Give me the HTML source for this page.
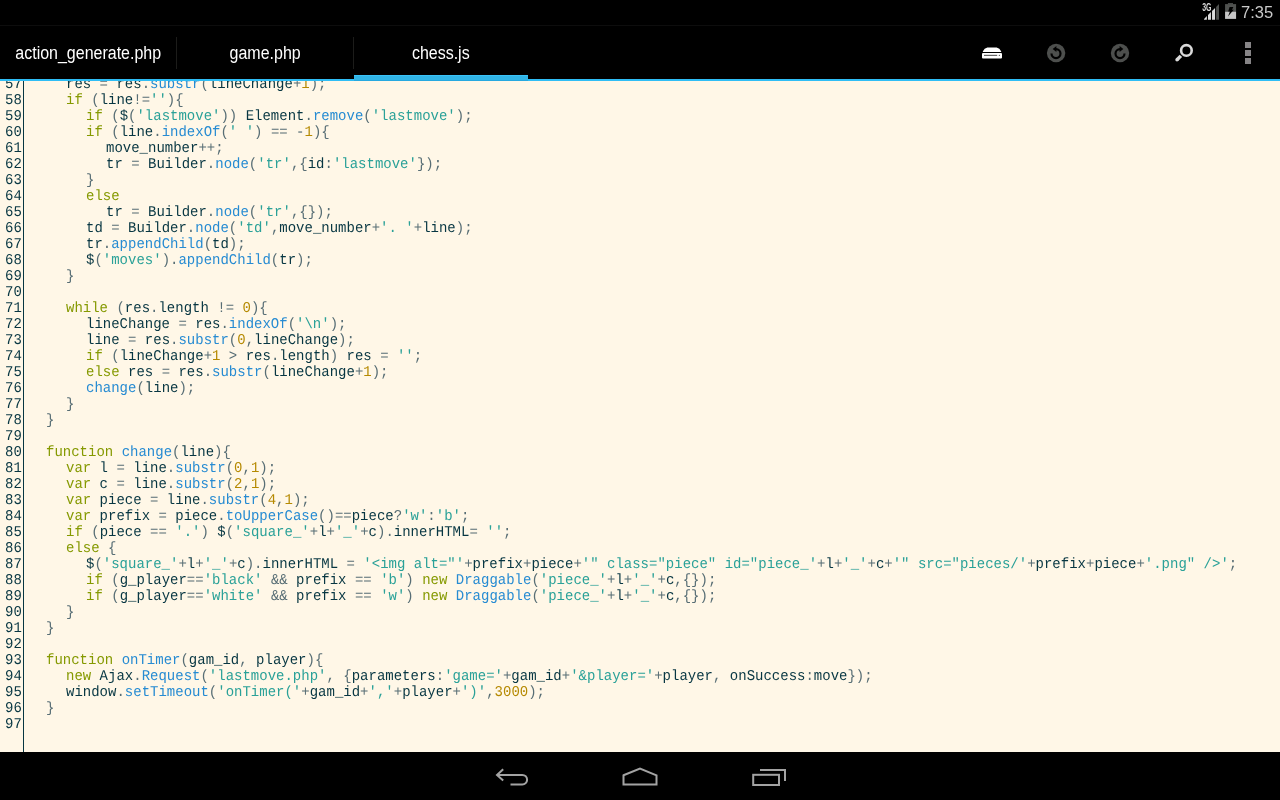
<!DOCTYPE html>
<html lang="en">
<head>
<meta charset="utf-8">
<title>chess.js</title>
<style>
html,body{margin:0;padding:0;}
body{width:1280px;height:800px;overflow:hidden;background:#000;position:relative;font-family:"Liberation Sans",sans-serif;}
#status{position:absolute;left:0;top:0;width:1280px;height:25px;background:#000;}
#status .sep{position:absolute;left:0;top:25px;width:1280px;height:1px;background:#0d0d0d;}
#clock{position:absolute;left:1241px;top:3px;font-size:16.5px;line-height:18px;color:#c9c9c9;will-change:transform;}
#bar{position:absolute;left:0;top:26px;width:1280px;height:53px;background:#000;}
.tab{position:absolute;top:0;height:53px;color:#fff;font-size:17.6px;line-height:54px;text-align:center;white-space:nowrap;will-change:transform;}
.tab span{display:inline-block;transform:scaleX(0.909);}
.tsep{position:absolute;top:11px;width:1px;height:32px;background:#1c1c1a;}
#sel{position:absolute;left:354px;top:75px;width:174px;height:6px;background:#31b4e6;box-sizing:border-box;border-top:1px solid #3ac2f8;border-bottom:1px solid #27a9e0;z-index:2;}
#blue{position:absolute;left:0;top:79px;width:1280px;height:2px;background:#2fbdf5;}
#ed{position:absolute;left:0;top:81px;width:1280px;height:671px;background:#fff7e7;overflow:hidden;}
#gut{position:absolute;left:23px;top:0;width:1px;height:671px;background:#073642;}
#code{text-rendering:geometricPrecision;will-change:transform;transform:scaleY(1.066667);transform-origin:0 0;position:absolute;left:0;top:-4px;width:1280px;font-family:"Liberation Mono",monospace;font-size:14px;line-height:15px;color:#073642;}
.ln{height:15px;position:relative;}
.no{position:absolute;left:5px;top:0;}
.cd{position:absolute;top:0;white-space:pre;}
.l0{left:26px}.l1{left:46px}.l2{left:66px}.l3{left:86px}.l4{left:106px}
.k{color:#859900}.f{color:#268bd2}.s{color:#2aa198}.n{color:#b58900}.p{color:#586e75}
#nav{position:absolute;left:0;top:752px;width:1280px;height:48px;background:#000;}
svg{position:absolute;overflow:visible;}
</style>
</head>
<body>
<div id="status">
  <div id="clock">7:35</div>
  <div class="sep"></div>
</div>
<div id="bar">
  <div class="tab" style="left:0;width:176px;"><span>action_generate.php</span></div>
  <div class="tsep" style="left:176px"></div>
  <div class="tab" style="left:177px;width:176px;"><span>game.php</span></div>
  <div class="tsep" style="left:353px"></div>
  <div class="tab" style="left:354px;width:174px;"><span>chess.js</span></div>
</div>
<div id="sel"></div>
<div id="blue"></div>
<div id="ed">
<div id="gut"></div>
<div id="code">
<div class="ln"><span class="no">57</span><span class="cd l2">res <span class="p">=</span> res<span class="p">.</span><span class="f">substr</span><span class="p">(</span>lineChange<span class="p">+</span><span class="n">1</span><span class="p">);</span></span></div>
<div class="ln"><span class="no">58</span><span class="cd l2"><span class="k">if</span> <span class="p">(</span>line<span class="p">!=</span><span class="s">''</span><span class="p">){</span></span></div>
<div class="ln"><span class="no">59</span><span class="cd l3"><span class="k">if</span> <span class="p">(</span>$<span class="p">(</span><span class="s">'lastmove'</span><span class="p">))</span> Element<span class="p">.</span><span class="f">remove</span><span class="p">(</span><span class="s">'lastmove'</span><span class="p">);</span></span></div>
<div class="ln"><span class="no">60</span><span class="cd l3"><span class="k">if</span> <span class="p">(</span>line<span class="p">.</span><span class="f">indexOf</span><span class="p">(</span><span class="s">' '</span><span class="p">)</span> <span class="p">==</span> <span class="p">-</span><span class="n">1</span><span class="p">){</span></span></div>
<div class="ln"><span class="no">61</span><span class="cd l4">move_number<span class="p">++;</span></span></div>
<div class="ln"><span class="no">62</span><span class="cd l4">tr <span class="p">=</span> Builder<span class="p">.</span><span class="f">node</span><span class="p">(</span><span class="s">'tr'</span><span class="p">,{</span>id<span class="p">:</span><span class="s">'lastmove'</span><span class="p">});</span></span></div>
<div class="ln"><span class="no">63</span><span class="cd l3"><span class="p">}</span></span></div>
<div class="ln"><span class="no">64</span><span class="cd l3"><span class="k">else</span></span></div>
<div class="ln"><span class="no">65</span><span class="cd l4">tr <span class="p">=</span> Builder<span class="p">.</span><span class="f">node</span><span class="p">(</span><span class="s">'tr'</span><span class="p">,{});</span></span></div>
<div class="ln"><span class="no">66</span><span class="cd l3">td <span class="p">=</span> Builder<span class="p">.</span><span class="f">node</span><span class="p">(</span><span class="s">'td'</span><span class="p">,</span>move_number<span class="p">+</span><span class="s">'. '</span><span class="p">+</span>line<span class="p">);</span></span></div>
<div class="ln"><span class="no">67</span><span class="cd l3">tr<span class="p">.</span><span class="f">appendChild</span><span class="p">(</span>td<span class="p">);</span></span></div>
<div class="ln"><span class="no">68</span><span class="cd l3">$<span class="p">(</span><span class="s">'moves'</span><span class="p">).</span><span class="f">appendChild</span><span class="p">(</span>tr<span class="p">);</span></span></div>
<div class="ln"><span class="no">69</span><span class="cd l2"><span class="p">}</span></span></div>
<div class="ln"><span class="no">70</span><span class="cd l0"></span></div>
<div class="ln"><span class="no">71</span><span class="cd l2"><span class="k">while</span> <span class="p">(</span>res<span class="p">.</span>length <span class="p">!=</span> <span class="n">0</span><span class="p">){</span></span></div>
<div class="ln"><span class="no">72</span><span class="cd l3">lineChange <span class="p">=</span> res<span class="p">.</span><span class="f">indexOf</span><span class="p">(</span><span class="s">'\n'</span><span class="p">);</span></span></div>
<div class="ln"><span class="no">73</span><span class="cd l3">line <span class="p">=</span> res<span class="p">.</span><span class="f">substr</span><span class="p">(</span><span class="n">0</span><span class="p">,</span>lineChange<span class="p">);</span></span></div>
<div class="ln"><span class="no">74</span><span class="cd l3"><span class="k">if</span> <span class="p">(</span>lineChange<span class="p">+</span><span class="n">1</span> <span class="p">&gt;</span> res<span class="p">.</span>length<span class="p">)</span> res <span class="p">=</span> <span class="s">''</span><span class="p">;</span></span></div>
<div class="ln"><span class="no">75</span><span class="cd l3"><span class="k">else</span> res <span class="p">=</span> res<span class="p">.</span><span class="f">substr</span><span class="p">(</span>lineChange<span class="p">+</span><span class="n">1</span><span class="p">);</span></span></div>
<div class="ln"><span class="no">76</span><span class="cd l3"><span class="f">change</span><span class="p">(</span>line<span class="p">);</span></span></div>
<div class="ln"><span class="no">77</span><span class="cd l2"><span class="p">}</span></span></div>
<div class="ln"><span class="no">78</span><span class="cd l1"><span class="p">}</span></span></div>
<div class="ln"><span class="no">79</span><span class="cd l0"></span></div>
<div class="ln"><span class="no">80</span><span class="cd l1"><span class="k">function</span> <span class="f">change</span><span class="p">(</span>line<span class="p">){</span></span></div>
<div class="ln"><span class="no">81</span><span class="cd l2"><span class="k">var</span> l <span class="p">=</span> line<span class="p">.</span><span class="f">substr</span><span class="p">(</span><span class="n">0</span><span class="p">,</span><span class="n">1</span><span class="p">);</span></span></div>
<div class="ln"><span class="no">82</span><span class="cd l2"><span class="k">var</span> c <span class="p">=</span> line<span class="p">.</span><span class="f">substr</span><span class="p">(</span><span class="n">2</span><span class="p">,</span><span class="n">1</span><span class="p">);</span></span></div>
<div class="ln"><span class="no">83</span><span class="cd l2"><span class="k">var</span> piece <span class="p">=</span> line<span class="p">.</span><span class="f">substr</span><span class="p">(</span><span class="n">4</span><span class="p">,</span><span class="n">1</span><span class="p">);</span></span></div>
<div class="ln"><span class="no">84</span><span class="cd l2"><span class="k">var</span> prefix <span class="p">=</span> piece<span class="p">.</span><span class="f">toUpperCase</span><span class="p">()==</span>piece<span class="p">?</span><span class="s">'w'</span><span class="p">:</span><span class="s">'b'</span><span class="p">;</span></span></div>
<div class="ln"><span class="no">85</span><span class="cd l2"><span class="k">if</span> <span class="p">(</span>piece <span class="p">==</span> <span class="s">'.'</span><span class="p">)</span> $<span class="p">(</span><span class="s">'square_'</span><span class="p">+</span>l<span class="p">+</span><span class="s">'_'</span><span class="p">+</span>c<span class="p">).</span>innerHTML<span class="p">=</span> <span class="s">''</span><span class="p">;</span></span></div>
<div class="ln"><span class="no">86</span><span class="cd l2"><span class="k">else</span> <span class="p">{</span></span></div>
<div class="ln"><span class="no">87</span><span class="cd l3">$<span class="p">(</span><span class="s">'square_'</span><span class="p">+</span>l<span class="p">+</span><span class="s">'_'</span><span class="p">+</span>c<span class="p">).</span>innerHTML <span class="p">=</span> <span class="s">'&lt;img alt="'</span><span class="p">+</span>prefix<span class="p">+</span>piece<span class="p">+</span><span class="s">'" class="piece" id="piece_'</span><span class="p">+</span>l<span class="p">+</span><span class="s">'_'</span><span class="p">+</span>c<span class="p">+</span><span class="s">'" src="pieces/'</span><span class="p">+</span>prefix<span class="p">+</span>piece<span class="p">+</span><span class="s">'.png" /&gt;'</span><span class="p">;</span></span></div>
<div class="ln"><span class="no">88</span><span class="cd l3"><span class="k">if</span> <span class="p">(</span>g_player<span class="p">==</span><span class="s">'black'</span> <span class="p">&amp;&amp;</span> prefix <span class="p">==</span> <span class="s">'b'</span><span class="p">)</span> <span class="k">new</span> <span class="f">Draggable</span><span class="p">(</span><span class="s">'piece_'</span><span class="p">+</span>l<span class="p">+</span><span class="s">'_'</span><span class="p">+</span>c<span class="p">,{});</span></span></div>
<div class="ln"><span class="no">89</span><span class="cd l3"><span class="k">if</span> <span class="p">(</span>g_player<span class="p">==</span><span class="s">'white'</span> <span class="p">&amp;&amp;</span> prefix <span class="p">==</span> <span class="s">'w'</span><span class="p">)</span> <span class="k">new</span> <span class="f">Draggable</span><span class="p">(</span><span class="s">'piece_'</span><span class="p">+</span>l<span class="p">+</span><span class="s">'_'</span><span class="p">+</span>c<span class="p">,{});</span></span></div>
<div class="ln"><span class="no">90</span><span class="cd l2"><span class="p">}</span></span></div>
<div class="ln"><span class="no">91</span><span class="cd l1"><span class="p">}</span></span></div>
<div class="ln"><span class="no">92</span><span class="cd l0"></span></div>
<div class="ln"><span class="no">93</span><span class="cd l1"><span class="k">function</span> <span class="f">onTimer</span><span class="p">(</span>gam_id<span class="p">,</span> player<span class="p">){</span></span></div>
<div class="ln"><span class="no">94</span><span class="cd l2"><span class="k">new</span> Ajax<span class="p">.</span><span class="f">Request</span><span class="p">(</span><span class="s">'lastmove.php'</span><span class="p">,</span> <span class="p">{</span>parameters<span class="p">:</span><span class="s">'game='</span><span class="p">+</span>gam_id<span class="p">+</span><span class="s">'&amp;player='</span><span class="p">+</span>player<span class="p">,</span> onSuccess<span class="p">:</span>move<span class="p">});</span></span></div>
<div class="ln"><span class="no">95</span><span class="cd l2">window<span class="p">.</span><span class="f">setTimeout</span><span class="p">(</span><span class="s">'onTimer('</span><span class="p">+</span>gam_id<span class="p">+</span><span class="s">','</span><span class="p">+</span>player<span class="p">+</span><span class="s">')'</span><span class="p">,</span><span class="n">3000</span><span class="p">);</span></span></div>
<div class="ln"><span class="no">96</span><span class="cd l1"><span class="p">}</span></span></div>
<div class="ln"><span class="no">97</span><span class="cd l0"></span></div>
</div>
</div>
<div id="nav"></div>
<svg id="ico" width="1280" height="800" viewBox="0 0 1280 800" style="left:0;top:0;pointer-events:none;z-index:5">
  <!-- status bar: signal -->
  <text x="1202.2" y="11.2" font-family="Liberation Sans, sans-serif" font-weight="bold" font-size="10.3" fill="#dcdcdc" textLength="9.3" lengthAdjust="spacingAndGlyphs">3G</text>
  <path d="M1204.07 19.85 V18.9 L1206.86 16.1 V19.85 Z" fill="#dcdcdc"/>
  <path d="M1208 19.85 V15 L1210.96 12.06 V19.85 Z" fill="#dcdcdc"/>
  <path d="M1212.04 19.85 V11 L1215.06 8 V19.85 Z" fill="#dcdcdc"/>
  <path d="M1216.14 19.85 V6.93 L1219 4.1 V19.85 Z" fill="#4f514f"/>
  <!-- battery -->
  <rect x="1227.9" y="3.1" width="5.1" height="1.5" fill="#4f514f"/>
  <rect x="1225.07" y="4.1" width="11" height="7.6" fill="#4f514f"/>
  <rect x="1225.07" y="11.65" width="11" height="7.25" fill="#c6c6c6"/>
  <path d="M1229.6 7 L1233.4 7 L1232 9.8 L1233.7 9.8 L1228 16.6 L1229.9 11.4 L1228.2 11.4 Z" fill="#000"/>
  <!-- save -->
  <path d="M982.8 52 L982.9 51.2 Q984.2 48.2 987.4 47.4 L996.6 47.4 Q999.8 48.2 1001.1 51.2 L1001.2 52 Z" fill="#fff"/>
  <rect x="982" y="53" width="20" height="5.5" rx="1" fill="#fff"/>
  <rect x="984" y="54.8" width="13.2" height="1.2" fill="#666"/>
  <circle cx="999.4" cy="55.4" r="0.7" fill="#666"/>
  <!-- undo -->
  <circle cx="1056.1" cy="53" r="9.2" fill="#4d4f4d"/>
  <path d="M1056 49.1 A4.5 4.5 0 1 1 1051.5 53.6" fill="none" stroke="#000" stroke-width="2.2"/>
  <path d="M1052.7 48.9 L1056.4 46 L1056.4 51.9 Z" fill="#000"/>
  <!-- redo -->
  <circle cx="1120" cy="53" r="9.2" fill="#4d4f4d"/>
  <path d="M1120 49.1 A4.5 4.5 0 1 0 1124.5 53.6" fill="none" stroke="#000" stroke-width="2.2"/>
  <path d="M1123.3 48.9 L1119.6 46 L1119.6 51.9 Z" fill="#000"/>
  <!-- search -->
  <circle cx="1186.4" cy="50.4" r="5.3" fill="none" stroke="#dadada" stroke-width="2.6"/>
  <path d="M1180.9 55.9 L1177 59.8" fill="none" stroke="#dadada" stroke-width="3.4"/>
  <circle cx="1177" cy="59.8" r="1.7" fill="#dadada"/>
  <!-- overflow -->
  <rect x="1245" y="42" width="6" height="6" fill="#868486"/>
  <rect x="1245" y="50" width="6" height="6" fill="#868486"/>
  <rect x="1245" y="58" width="6" height="6" fill="#868486"/>
  <!-- nav: back -->
  <g fill="none" stroke="#a3a3a3" stroke-width="2">
    <path d="M503.2 769.2 L497 774.9 L503.2 780.6"/>
    <path d="M497 774.9 H522.3 A4.8 4.8 0 0 1 522.3 784.5 H510.5"/>
    <!-- home -->
    <path d="M623.5 775.3 L640 768.6 L656.5 775.3 V784.6 H623.5 Z"/>
    <!-- recents -->
    <rect x="753.2" y="774.8" width="25.8" height="10.2"/>
    <path d="M760 770 H785 V781"/>
  </g>
</svg>

</body>
</html>
